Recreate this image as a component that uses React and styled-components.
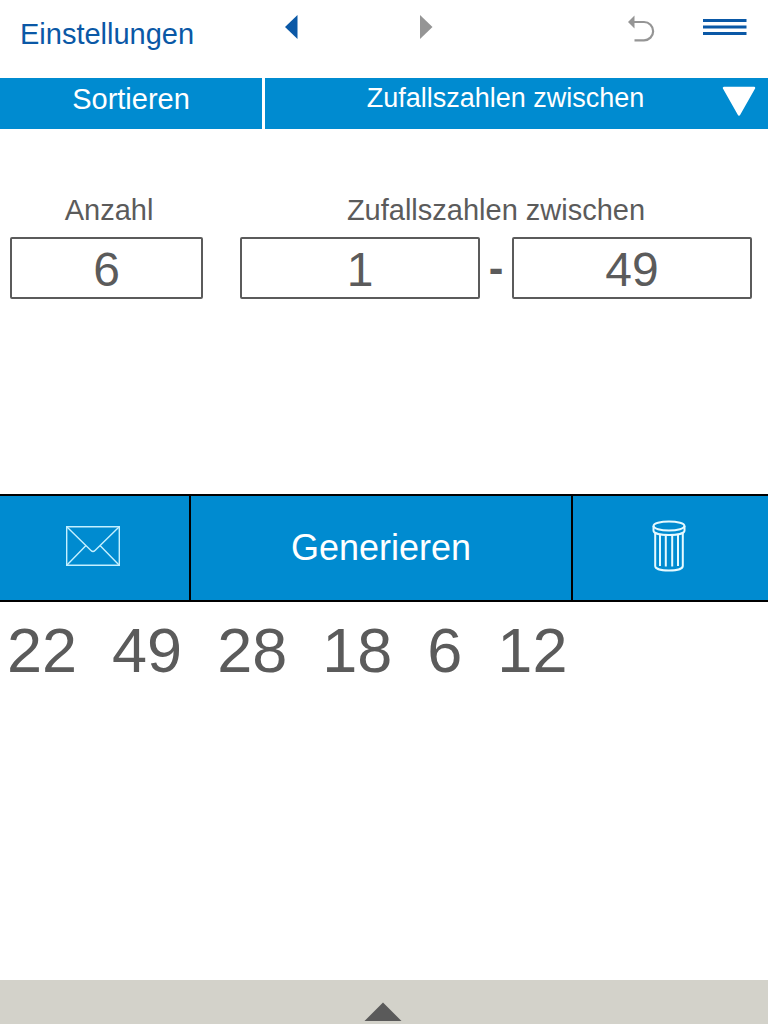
import { useState } from 'react'
import styled, { createGlobalStyle } from 'styled-components'

const initialNumbers = [22, 49, 28, 18, 6, 12]

const App = () => {
  const [count, setCount] = useState('6')
  const [min, setMin] = useState('1')
  const [max, setMax] = useState('49')
  const [numbers, setNumbers] = useState(initialNumbers)

  const handleGenerate = () => {
    const low = Number(min)
    const range = Number(max) - low + 1
    const next = Array.from(
      { length: Number(count) },
      () => low + Math.floor(Math.random() * range)
    )
    setNumbers(next)
  }

  const handleSort = () => {
    setNumbers([...numbers].sort((a, b) => a - b))
  }

  return (
    <Page>
      <GlobalStyle />
      <Header>
        <SettingsLink href='#settings'>Einstellungen</SettingsLink>
        <IconButton aria-label='Zurück'>
          <svg width='14' height='26' viewBox='0 0 14 26'>
            <path d='M13.5 1v24L1 13z' fill='#0a58a6' />
          </svg>
        </IconButton>
        <IconButton aria-label='Vor'>
          <svg width='14' height='26' viewBox='0 0 14 26'>
            <path d='M1 1v24l12.5-12z' fill='#959595' />
          </svg>
        </IconButton>
        <HeaderActions>
          <IconButton aria-label='Rückgängig'>
            <svg width='27' height='28' viewBox='0 0 27 28'>
              <path d='M0 8 6.5 1.500v13z' fill='#959595' />
              <path
                d='M5 8h11a9 9 0 0 1 0 18.300H6.500'
                fill='none'
                stroke='#959595'
                strokeWidth='2.200'
              />
            </svg>
          </IconButton>
          <IconButton aria-label='Menü'>
            <svg width='44' height='28' viewBox='0 0 44 28'>
              <path
                d='M0 6.500h43.500M0 13h43.500M0 19.500h43.500'
                stroke='#0a58a6'
                strokeWidth='2.800'
              />
            </svg>
          </IconButton>
        </HeaderActions>
      </Header>

      <TabBar>
        <Tab onClick={handleSort}>Sortieren</Tab>
        <ModeTab>
          <span>Zufallszahlen zwischen</span>
          <svg width='34' height='31' viewBox='0 0 34 31'>
            <path
              d='M2 2h30L17 28.500z'
              fill='#fff'
              stroke='#fff'
              strokeWidth='2.500'
              strokeLinejoin='round'
            />
          </svg>
        </ModeTab>
      </TabBar>

      <Fields>
        <div>
          <Label htmlFor='count'>Anzahl</Label>
          <CountRow>
            <NumberInput
              id='count'
              inputMode='numeric'
              value={count}
              onChange={(e) => setCount(e.target.value)}
            />
          </CountRow>
        </div>
        <div>
          <Label htmlFor='min'>Zufallszahlen zwischen</Label>
          <RangeRow>
            <NumberInput
              id='min'
              inputMode='numeric'
              value={min}
              onChange={(e) => setMin(e.target.value)}
            />
            <Dash>-</Dash>
            <NumberInput
              aria-label='Zufallszahlen bis'
              inputMode='numeric'
              value={max}
              onChange={(e) => setMax(e.target.value)}
            />
          </RangeRow>
        </div>
      </Fields>

      <ActionBar>
        <IconAction aria-label='Senden'>
          <svg width='54' height='40' viewBox='0 0 54 40'>
            <g fill='none' stroke='#c4f0ff' strokeWidth='1.400'>
              <path d='M0.700 0.700h52.600v38.600H0.700z' />
              <path d='M1 1 25 24.500q2 2 4 0L53 1M1 39 20 19.500M53 39 34 19.500' />
            </g>
          </svg>
        </IconAction>
        <Action onClick={handleGenerate}>Generieren</Action>
        <IconAction aria-label='Löschen' onClick={() => setNumbers([])}>
          <svg width='34' height='52' viewBox='0 0 34 52'>
            <g fill='none' stroke='#e6faff' strokeWidth='2'>
              <ellipse cx='17' cy='6' rx='15.500' ry='4.500' />
              <path d='M1.500 6v4.500c0 6 31 6 31 0V6' />
              <path d='M3.200 13v33c0 6 27.600 6 27.600 0V13' />
              <path d='M8 15v31M13.800 16v30.500M20.200 16v30.500M26 15v31' />
            </g>
          </svg>
        </IconAction>
      </ActionBar>

      <Results>
        {numbers.map((number, i) => (
          <li key={i}>{number}</li>
        ))}
      </Results>

      <Drawer aria-label='Öffnen'>
        <svg width='38' height='20' viewBox='0 0 38 20'>
          <path d='M19 0.500 37.500 19H0.500z' fill='#5a5a5a' />
        </svg>
      </Drawer>
    </Page>
  )
}

const GlobalStyle = createGlobalStyle`
  * {
    box-sizing: border-box;
  }

  body {
    margin: 0;
    background: #fff;
    color: #5b5b5b;
    font-family: 'Liberation Sans', Arial, sans-serif;
  }

  button,
  input {
    margin: 0;
    padding: 0;
    border: none;
    border-radius: 0;
    background: none;
    color: inherit;
    font-family: inherit;
  }

  svg {
    display: block;
    flex-shrink: 0;
  }
`

const Page = styled.div`
  display: flex;
  flex-direction: column;
  min-height: 100vh;
`

const Header = styled.header`
  display: grid;
  grid-template-columns: 35fr 21fr 21fr 43fr;
  align-items: start;
  height: 78px;
  padding-top: 14px;
`

const SettingsLink = styled.a`
  padding: 4px 0 0 20px;
  color: #0a58a6;
  font-size: 29px;
  line-height: 32px;
  text-decoration: none;
`

const IconButton = styled.button`
  display: flex;
  justify-content: center;
`

const HeaderActions = styled.div`
  display: flex;
  justify-content: flex-end;
  gap: 48px;
  padding-right: 21px;
`

const TabBar = styled.div`
  display: grid;
  grid-template-columns: 262fr 503fr;
  gap: 3px;
  height: 51px;
`

const Tab = styled.button`
  padding-bottom: 10px;
  background: #008bd0;
  color: #fff;
  font-size: 29px;
  line-height: 32px;
`

const ModeTab = styled(Tab)`
  display: flex;
  align-items: center;
  padding: 0 12px 4px 24px;
  font-size: 27px;

  span {
    flex: 1;
    padding-bottom: 8px;
  }
`

const Fields = styled.section`
  display: grid;
  grid-template-columns: 99fr 256fr;
  gap: 32px;
  padding: 65px 16px 195px 10px;
`

const Label = styled.label`
  display: block;
  margin-bottom: 11px;
  font-size: 29px;
  line-height: 32px;
  text-align: center;
`

const CountRow = styled.div`
  padding-right: 5px;
`

const RangeRow = styled.div`
  display: grid;
  grid-template-columns: 1fr 32px 1fr;
  align-items: center;
`

const NumberInput = styled.input`
  display: block;
  width: 100%;
  height: 62px;
  padding-top: 2px;
  border: 2px solid #5b5b5b;
  border-radius: 2px;
  font-size: 48px;
  text-align: center;
`

const Dash = styled.span`
  font-size: 44px;
  font-weight: 700;
  line-height: 48px;
  text-align: center;
`

const ActionBar = styled.div`
  display: grid;
  grid-template-columns: 189fr 380fr 195fr;
  gap: 2px;
  height: 108px;
  border: solid #000;
  border-width: 2px 0;
  background: #000;
`

const Action = styled.button`
  display: flex;
  align-items: center;
  justify-content: center;
  background: #008bd0;
  color: #fff;
  font-size: 36px;
`

const IconAction = styled(Action)`
  padding: 0 3px 4px 0;
`

const Results = styled.ul`
  display: flex;
  flex: 1;
  flex-wrap: wrap;
  align-content: flex-start;
  column-gap: 35px;
  margin: 0;
  padding: 12px 7px;
  list-style: none;
  font-size: 63px;
  line-height: 72px;
`

const Drawer = styled.button`
  display: flex;
  align-items: flex-end;
  justify-content: center;
  height: 44px;
  padding: 0 3px 2px 0;
  background: #d3d2ca;
`

export default App
